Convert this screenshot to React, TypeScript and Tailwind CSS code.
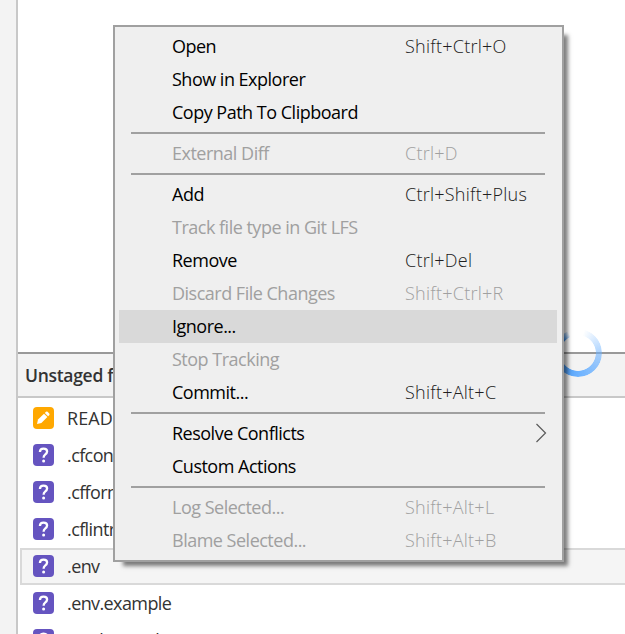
import { ReactNode } from "react";

type Item = { label: string; keys?: string; off?: boolean; hover?: boolean; sub?: boolean };

const groups: Item[][] = [
  [
    { label: "Open", keys: "Shift+Ctrl+O" },
    { label: "Show in Explorer" },
    { label: "Copy Path To Clipboard" },
  ],
  [{ label: "External Diff", keys: "Ctrl+D", off: true }],
  [
    { label: "Add", keys: "Ctrl+Shift+Plus" },
    { label: "Track file type in Git LFS", off: true },
    { label: "Remove", keys: "Ctrl+Del" },
    { label: "Discard File Changes", keys: "Shift+Ctrl+R", off: true },
    { label: "Ignore...", hover: true },
    { label: "Stop Tracking", off: true },
    { label: "Commit...", keys: "Shift+Alt+C" },
  ],
  [{ label: "Resolve Conflicts", sub: true }, { label: "Custom Actions" }],
  [
    { label: "Log Selected...", keys: "Shift+Alt+L", off: true },
    { label: "Blame Selected...", keys: "Shift+Alt+B", off: true },
  ],
];

function MenuRow({ item }: { item: Item }) {
  return (
    <div className={`ml-1 mr-[5px] flex h-[33px] items-center pl-[53px] ${item.hover ? "bg-[#d9d9d9]" : ""}`}>
      <span className={`-mt-px w-[233px] tracking-[-0.5px] ${item.off ? "text-[#a0a0a0]" : "text-black"}`}>{item.label}</span>
      {item.keys && <span className={`-mt-px font-light tracking-[0.25px] ${item.off ? "text-[#a0a0a0]" : "text-[#202020]"}`}>{item.keys}</span>}
      {item.sub && (
        <svg className="-mt-0.5 ml-auto mr-[10px]" width="12" height="20" viewBox="0 0 12 20" fill="none" stroke="#5a5a5a" strokeWidth="1.2">
          <path d="M1.5 1L10.5 10L1.5 19" />
        </svg>
      )}
    </div>
  );
}

function PencilIcon() {
  return (
    <svg width="21" height="22" viewBox="0 0 21 22" className="shrink-0">
      <rect width="21" height="22" rx="4" fill="#ffa800" />
      <path d="M4 17L5 12.6L11 6.7L14.4 10.1L8.4 15.9Z" fill="#fff" />
      <path d="M11.8 5.9L13 4.7Q13.8 4.1 14.6 4.8L16.2 6.4Q17 7.3 16.2 8.2L15.1 9.3Z" fill="#fff" />
    </svg>
  );
}

function QuestionIcon() {
  return (
    <svg width="21" height="22" viewBox="0 0 21 22" className="shrink-0">
      <rect width="21" height="22" rx="4" fill="#6554c0" />
      <path d="M6.9 8C7 5.8 8.4 4.6 10.5 4.6C12.6 4.6 14.1 5.8 14.1 7.6C14.1 9.1 13.2 9.8 12.1 10.6C11 11.4 10.6 12 10.6 13.8" fill="none" stroke="#fff" strokeWidth="2.3" />
      <circle cx="10.6" cy="17" r="1.5" fill="#fff" />
    </svg>
  );
}

function FileRow({ icon, name, selected, wide }: { icon: ReactNode; name: string; selected?: boolean; wide?: boolean }) {
  return (
    <div className={`ml-0.5 flex h-[37px] shrink-0 items-center border-y-2 border-l-2 pb-px pl-[11px] ${selected ? "border-[#d9d9d9] bg-[#f5f5f5]" : "border-transparent"}`}>
      {icon}
      <span className={`ml-[13px] whitespace-nowrap text-[#333] ${wide ? "tracking-[0.1px]" : "tracking-[-0.6px]"}`}>{name}</span>
    </div>
  );
}

export default function App() {
  return (
    <div className="relative flex h-[634px] w-[625px] overflow-hidden bg-white font-['Open_Sans','Noto_Sans',sans-serif] text-[18px] leading-[24px]">
      <aside className="w-[18px] shrink-0 border-r-2 border-[#c8c8c8] bg-[#f3f3f3]" />
      <main className="flex min-w-0 flex-1 flex-col">
        <div className="h-[352px] shrink-0" />
        <header className="flex h-[46px] shrink-0 items-center border-b-2 border-t-2 border-b-[#c8c8c8] border-t-[#999] bg-[#f3f3f3] pb-px pl-[7px] text-[17.5px] font-semibold tracking-[-0.3px] text-[#333]">
          Unstaged files
        </header>
        <div className="mt-0.5 flex flex-col">
          <FileRow icon={<PencilIcon />} name="README.md" wide />
          <FileRow icon={<QuestionIcon />} name=".cfconfig.json" />
          <FileRow icon={<QuestionIcon />} name=".cfformat.json" />
          <FileRow icon={<QuestionIcon />} name=".cflintrc" />
          <FileRow icon={<QuestionIcon />} name=".env" selected />
          <FileRow icon={<QuestionIcon />} name=".env.example" />
          <FileRow icon={<QuestionIcon />} name="readme.md" />
        </div>
      </main>

      <div className="absolute left-[553.5px] top-[329px] h-12 w-12 rounded-full bg-[conic-gradient(from_15deg,#6bb1ff00,#6bb1ff90_75deg,#6bb1ff_165deg,#3f94f0_230deg,#3f94f0_300deg,#6bb1ff00_320deg)] [mask:radial-gradient(circle_closest-side,transparent_17.5px,#000_18.2px)]" />

      <div className="absolute left-[113px] top-[25px] w-[451px] border-2 border-[#a0a0a0] bg-[#efefef] py-[3px] shadow-[7px_7px_4px_-3px_rgba(0,0,0,0.5)]">
        {groups.map((g, i) => (
          <div key={i}>
            {i > 0 && <div className="my-[3px] ml-4 mr-[17px] h-0.5 bg-[#a0a0a0]" />}
            {g.map((it) => (
              <MenuRow key={it.label} item={it} />
            ))}
          </div>
        ))}
      </div>
    </div>
  );
}
